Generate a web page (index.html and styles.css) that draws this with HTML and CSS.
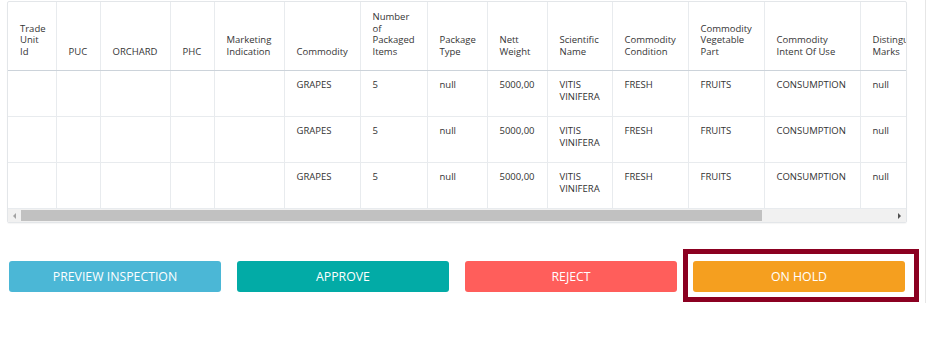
FILE: index.html
```html
<!DOCTYPE html>
<html>
<head>
<meta charset="utf-8">
<link rel="stylesheet" href="styles.css">
</head>
<body>
<div class="page">
  <main class="main">
    <div class="grid-wrap">
      <div class="grid-scroll">
        <table class="grid">
          <colgroup>
            <col class="w48"><col class="w44"><col class="w70"><col class="w44"><col class="w70">
            <col class="w76"><col class="w67"><col class="w60"><col class="w60"><col class="w65">
            <col class="w76"><col class="w76"><col class="w96"><col class="wlast">
          </colgroup>
          <thead>
            <tr>
              <th>Trade<br>Unit<br>Id</th>
              <th>PUC</th>
              <th>ORCHARD</th>
              <th>PHC</th>
              <th>Marketing<br>Indication</th>
              <th>Commodity</th>
              <th>Number<br>of<br>Packaged<br>Items</th>
              <th>Package<br>Type</th>
              <th>Nett<br>Weight</th>
              <th>Scientific<br>Name</th>
              <th>Commodity<br>Condition</th>
              <th>Commodity<br>Vegetable<br>Part</th>
              <th>Commodity<br>Intent Of Use</th>
              <th>Distinguishing<br>Marks</th>
            </tr>
          </thead>
          <tbody>
            <tr>
              <td></td><td></td><td></td><td></td><td></td>
              <td>GRAPES</td><td>5</td><td>null</td><td>5000,00</td><td>VITIS<br>VINIFERA</td>
              <td>FRESH</td><td>FRUITS</td><td>CONSUMPTION</td><td>null</td>
            </tr>
            <tr>
              <td></td><td></td><td></td><td></td><td></td>
              <td>GRAPES</td><td>5</td><td>null</td><td>5000,00</td><td>VITIS<br>VINIFERA</td>
              <td>FRESH</td><td>FRUITS</td><td>CONSUMPTION</td><td>null</td>
            </tr>
            <tr>
              <td></td><td></td><td></td><td></td><td></td>
              <td>GRAPES</td><td>5</td><td>null</td><td>5000,00</td><td>VITIS<br>VINIFERA</td>
              <td>FRESH</td><td>FRUITS</td><td>CONSUMPTION</td><td>null</td>
            </tr>
          </tbody>
        </table>
      </div>
      <div class="hscroll">
        <span class="arrow arrow-left"></span>
        <div class="track"><div class="thumb"></div></div>
        <span class="arrow arrow-right"></span>
      </div>
    </div>

    <div class="actions">
      <button class="btn btn-preview">PREVIEW INSPECTION</button>
      <button class="btn btn-approve">APPROVE</button>
      <button class="btn btn-reject">REJECT</button>
      <div class="highlight-wrap">
        <button class="btn btn-hold">ON HOLD</button>
        <span class="highlight"></span>
      </div>
    </div>
  </main>
  <aside class="side"></aside>
</div>
</body>
</html>
```

FILE: styles.css
```css
* { box-sizing: border-box; }

html, body {
  margin: 0;
  padding: 0;
  background: #ffffff;
}

body {
  font-family: "Open Sans", "Noto Sans", "Liberation Sans", sans-serif;
  color: #333333;
}

.page {
  display: flex;
  align-items: flex-start;
  width: 947px;
}

.main {
  width: 926px;
  height: 303px;
  border-right: 1px solid #e6e6e6;
  padding-top: 1px;
}

.side {
  flex: 1;
}

.grid-wrap {
  margin-left: 7px;
  width: 900px;
  border: 1px solid #e3e6e9;
  border-radius: 2px;
  box-shadow: 0 1px 1px rgba(0, 0, 0, 0.04);
  overflow: hidden;
}

.grid-scroll {
  overflow: hidden;
}

.grid {
  border-collapse: collapse;
  table-layout: fixed;
  width: 1073px;
  font-size: 9.5px;
  line-height: 11.5px;
}

.w48 { width: 48px; }
.w44 { width: 44px; }
.w70 { width: 70px; }
.w76 { width: 76px; }
.w67 { width: 67px; }
.w60 { width: 60px; }
.w65 { width: 65px; }
.w96 { width: 96px; }
.wlast { width: 221px; }

.grid th {
  font-weight: normal;
  text-align: left;
  vertical-align: bottom;
  height: 68px;
  padding: 9px 6px 13px 12px;
  color: #353535;
  border-right: 1px solid #e8ebee;
  border-bottom: 1px solid #ccd3da;
  white-space: nowrap;
  overflow: hidden;
}

.grid td {
  vertical-align: top;
  height: 46px;
  padding: 8px 6px 10px 12px;
  color: #333333;
  border-right: 1px solid #e8ebee;
  border-bottom: 1px solid #e8ebee;
  white-space: nowrap;
  overflow: hidden;
}

.hscroll {
  display: flex;
  align-items: center;
  height: 13px;
  background: #f1f1f1;
}

.arrow {
  width: 13px;
  height: 13px;
  display: flex;
  align-items: center;
  justify-content: center;
}

.arrow-left::before {
  content: "";
  border-top: 3px solid transparent;
  border-bottom: 3px solid transparent;
  border-right: 3px solid #a3a3a3;
}

.arrow-right::before {
  content: "";
  border-top: 3px solid transparent;
  border-bottom: 3px solid transparent;
  border-left: 3px solid #505050;
}

.track {
  flex: 1;
  height: 13px;
  padding: 1px 0;
}

.thumb {
  width: 741px;
  height: 11px;
  background: #c1c1c1;
}

.actions {
  display: flex;
  gap: 16px;
  margin-top: 38px;
  padding-left: 9px;
}

.btn {
  width: 212px;
  height: 31px;
  border: 0;
  border-radius: 3px;
  color: #ffffff;
  font-family: "Open Sans", "Noto Sans", "Liberation Sans", sans-serif;
  font-size: 12.3px;
  padding: 0;
  cursor: pointer;
}

.btn-preview { background: #4bb7d6; }
.btn-approve { background: #02aba6; }
.btn-reject { background: #ff5e5b; }
.btn-hold { background: #f59f1f; display: block; }

.highlight-wrap {
  position: relative;
}

.highlight {
  position: absolute;
  left: -10px;
  top: -12px;
  right: -14px;
  bottom: -10px;
  border: 5px solid #8b0021;
  pointer-events: none;
}
```
